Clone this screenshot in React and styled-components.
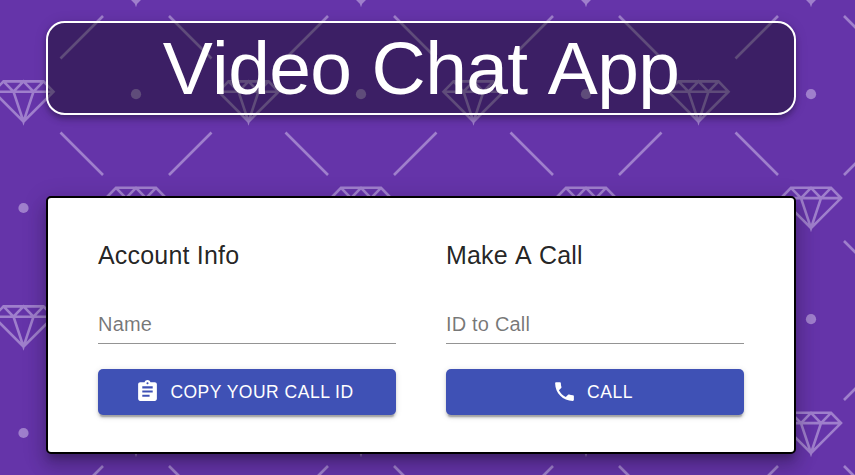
import React from "react";
import styled, { createGlobalStyle } from "styled-components";

const gem = "M-20 0H20L30 10.3L0 40.3L-30 10.3ZM-30 10.3H30M-20 0L-10 10.3L0 0L10 10.3L20 0M-10 10.3L0 40.3L10 10.3";

const tile = `<svg xmlns="http://www.w3.org/2000/svg" width="225" height="225" viewBox="0 0 225 225">
<g fill="none" stroke="#9f7fcc" stroke-width="2.6">
<path transform="translate(23.5 81.4)" d="${gem}"/>
<path transform="translate(248.5 81.4)" d="${gem}"/>
<path transform="translate(136 187.8)" d="${gem}"/>
<path transform="translate(136 -37.2)" d="${gem}"/>
<path d="M60.5 58.5L103 16M169 16L211.5 58.5M60.5 132.5L103 175M169 175L211.5 132.5"/>
</g>
<g fill="#9f7fcc"><circle cx="136" cy="94.2" r="5.1"/><circle cx="23.5" cy="208" r="5.1"/></g>
</svg>`;

const GlobalStyle = createGlobalStyle`
  * { box-sizing: border-box; }
  html { height: 100%; }
  body {
    margin: 0;
    min-height: 100%;
    overflow: hidden;
    background-color: #6534a9;
    background-image: url("data:image/svg+xml,${encodeURIComponent(tile)}");
    background-size: 225px 225px;
    font-family: Arial, "Liberation Sans", sans-serif;
    font-kerning: none;
  }
`;

const Page = styled.div`
  display: flex;
  flex-direction: column;
  width: 750px;
  margin-left: 46px;
  padding-top: 21px;
  gap: 81px;
`;

const TitleBar = styled.header`
  display: flex;
  justify-content: center;
  align-items: center;
  height: 94px;
  border: 2px solid #fff;
  border-radius: 18.75px;
  background: rgba(0, 0, 0, 0.4);
  box-shadow: 0 2.5px 5px -1px rgba(0, 0, 0, 0.2),
    0 5px 6px 0 rgba(0, 0, 0, 0.14), 0 1px 12.5px 0 rgba(0, 0, 0, 0.12);
`;

const Title = styled.h1`
  margin: 0;
  color: #fff;
  font-size: 75px;
  font-weight: 400;
  line-height: 90px;
  letter-spacing: -0.00833em;
`;

const Card = styled.form`
  display: grid;
  grid-template-columns: 1fr 1fr;
  gap: 50px;
  height: 258px;
  padding: 37px 50px 0;
  border: 2px solid #000;
  border-radius: 5px;
  background: #fff;
  box-shadow: 0 7.5px 7.5px -3.75px rgba(0, 0, 0, 0.2),
    0 12.5px 17.5px 1.25px rgba(0, 0, 0, 0.14),
    0 5px 22.5px 3.75px rgba(0, 0, 0, 0.12);
`;

const Section = styled.section`
  display: flex;
  flex-direction: column;
`;

const SectionTitle = styled.h2`
  margin: 0;
  color: rgba(0, 0, 0, 0.87);
  font-size: 25px;
  font-weight: 400;
  line-height: 40px;
  letter-spacing: 0.0075em;
`;

const Field = styled.input`
  height: 40px;
  margin-top: 29px;
  padding: 2px 0 0;
  border: 0;
  border-bottom: 1px solid rgba(0, 0, 0, 0.42);
  border-radius: 0;
  outline: 0;
  background: none;
  color: rgba(0, 0, 0, 0.87);
  font: 20px Arial, "Liberation Sans", sans-serif;
  font-kerning: none;
  letter-spacing: 0.00938em;

  &::placeholder {
    color: rgba(0, 0, 0, 0.54);
    opacity: 1;
  }
`;

const Button = styled.button`
  display: flex;
  align-items: center;
  justify-content: center;
  height: 46px;
  margin-top: 25px;
  padding: 0;
  border: 0;
  border-radius: 5px;
  background: #3f51b5;
  color: #fff;
  font: 17.5px/30px Arial, "Liberation Sans", sans-serif;
  letter-spacing: 0.02857em;
  text-transform: uppercase;
  box-shadow: 0 3.75px 1.25px -2.5px rgba(0, 0, 0, 0.2),
    0 2.5px 2.5px 0 rgba(0, 0, 0, 0.14), 0 1.25px 6.25px 0 rgba(0, 0, 0, 0.12);
`;

const Icon = styled.svg`
  width: 25px;
  height: 25px;
  margin: -1px 10px 0 -5px;
  fill: currentColor;
`;

const clipboard =
  "M19 3h-4.18C14.4 1.84 13.3 1 12 1c-1.3 0-2.4.84-2.82 2H5c-1.1 0-2 .9-2 2v14c0 1.1.9 2 2 2h14c1.1 0 2-.9 2-2V5c0-1.1-.9-2-2-2zm-7 0c.55 0 1 .45 1 1s-.45 1-1 1-1-.45-1-1 .45-1 1-1zm2 14H7v-2h7v2zm3-4H7v-2h10v2zm0-4H7V7h10v2z";
const phone =
  "M6.62 10.79c1.44 2.83 3.76 5.14 6.59 6.59l2.2-2.2c.27-.27.67-.36 1.02-.24 1.12.37 2.33.57 3.57.57.55 0 1 .45 1 1V20c0 .55-.45 1-1 1-9.39 0-17-7.61-17-17 0-.55.45-1 1-1h3.5c.55 0 1 .45 1 1 0 1.25.2 2.45.57 3.57.11.35.03.74-.25 1.02l-2.2 2.2z";

function CallSection({ title, placeholder, icon, action }) {
  return (
    <Section>
      <SectionTitle>{title}</SectionTitle>
      <Field placeholder={placeholder} aria-label={placeholder} />
      <Button type="button">
        <Icon viewBox="0 0 24 24" aria-hidden="true">
          <path d={icon} />
        </Icon>
        {action}
      </Button>
    </Section>
  );
}

export default function App() {
  return (
    <>
      <GlobalStyle />
      <Page>
        <TitleBar>
          <Title>Video Chat App</Title>
        </TitleBar>
        <Card>
          <CallSection title="Account Info" placeholder="Name" icon={clipboard} action="Copy Your Call ID" />
          <CallSection title="Make A Call" placeholder="ID to Call" icon={phone} action="Call" />
        </Card>
      </Page>
    </>
  );
}
